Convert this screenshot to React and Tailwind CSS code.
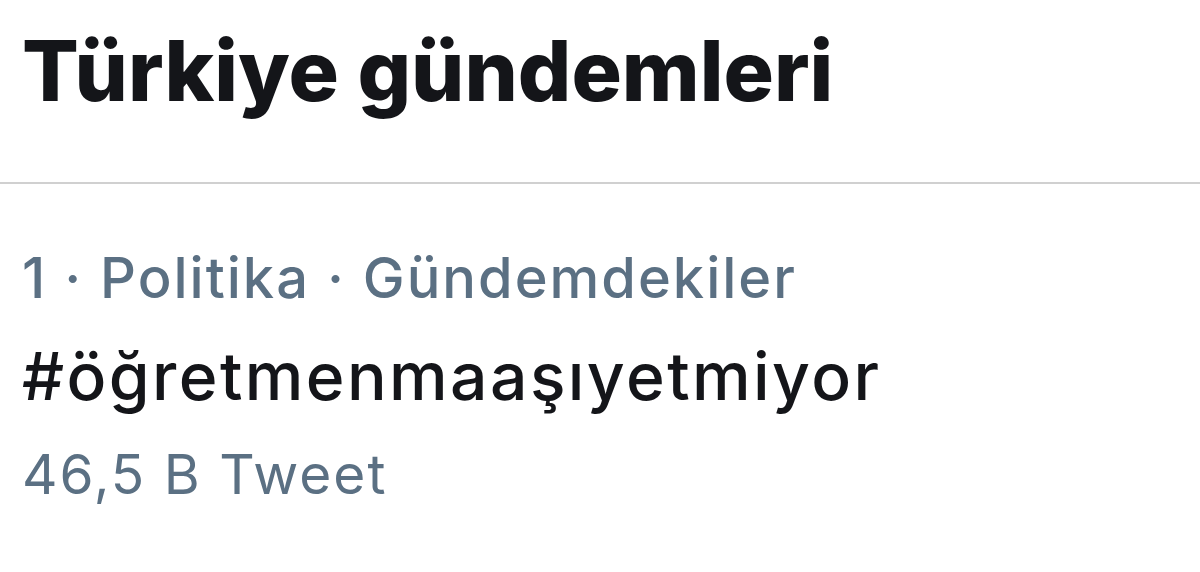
export default function App() {
  return (
    <div className="w-[1200px] h-[572px] bg-white overflow-hidden" style={{ fontFamily: 'Inter, "Liberation Sans", Arial, sans-serif' }}>
      <div className="h-[184px] pl-[22px] pt-[21px] border-b-2 border-[#d0d0d0]">
        <div className="text-[84px] font-extrabold leading-[100px] text-[#141519] tracking-[0px]">Türkiye gündemleri</div>
      </div>
      <div className="pl-[22px] pt-[64px]">
        <div className="text-[56px] font-medium leading-[60px] text-[#5b7083] tracking-[2px]">1 · Politika · Gündemdekiler</div>
        <div className="text-[66px] font-medium leading-[82px] mt-[27px] text-[#141519] tracking-[2.4px]">#öğretmenmaaşıyetmiyor</div>
        <div className="text-[55px] leading-[70px] mt-[22px] text-[#5b7083] tracking-[2px]">46,5 B Tweet</div>
      </div>
    </div>
  );
}
